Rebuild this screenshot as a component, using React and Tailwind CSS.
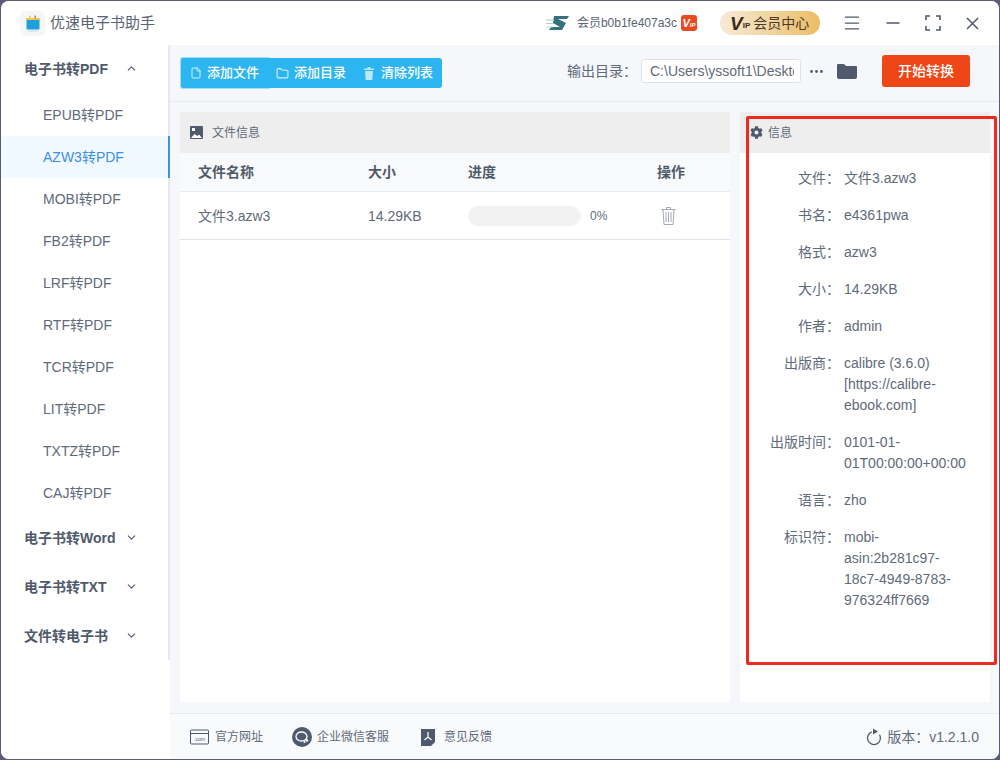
import React from 'react';
import { ChevronUp, ChevronDown, File, Folder, Menu, Ellipsis } from 'lucide-react';
import { FaCog } from 'react-icons/fa';

const FONT = '"Liberation Sans", "Noto Sans CJK SC", sans-serif';

const subItems = ['EPUB转PDF', 'AZW3转PDF', 'MOBI转PDF', 'FB2转PDF', 'LRF转PDF', 'RTF转PDF', 'TCR转PDF', 'LIT转PDF', 'TXTZ转PDF', 'CAJ转PDF'];

const infoRows = [
  { label: '文件：', value: '文件3.azw3', h: 'h-[37px]' },
  { label: '书名：', value: 'e4361pwa', h: 'h-[37px]' },
  { label: '格式：', value: 'azw3', h: 'h-[37px]' },
  { label: '大小：', value: '14.29KB', h: 'h-[37px]' },
  { label: '作者：', value: 'admin', h: 'h-[37px]' },
  { label: '出版商：', value: ['calibre (3.6.0)', '[https://calibre-', 'ebook.com]'], h: 'h-[79px]' },
  { label: '出版时间：', value: ['0101-01-', '01T00:00:00+00:00'], h: 'h-[58px]' },
  { label: '语言：', value: 'zho', h: 'h-[37px]' },
  { label: '标识符：', value: ['mobi-', 'asin:2b281c97-', '18c7-4949-8783-', '976324ff7669'], h: 'h-[84px]' },
];

function SideGroup({ title, open }) {
  return (
    <div className="h-[49px] flex items-center pl-[23px] pb-[2px] text-sm font-bold text-[#4f5a6b]">
      <span className="w-[100px] whitespace-nowrap">{title}</span>
      {open ? <ChevronUp size={13} className="ml-[1px]" /> : <ChevronDown size={13} className="ml-[1px]" />}
    </div>
  );
}

function Logo() {
  return (
    <div className="w-[25px] h-[25px] rounded-md bg-[#f4f6f8] flex items-center justify-center">
      <svg width="20" height="20" viewBox="0 0 20 20">
        <rect x="3.5" y="5" width="13" height="11.5" rx="1" fill="#1d9fe0" />
        <rect x="3.5" y="5" width="13" height="2" fill="#f5c542" />
        <rect x="6" y="2.5" width="1.5" height="3" fill="#f5c542" />
        <rect x="11.5" y="2.5" width="1.5" height="3" fill="#e8794a" />
        <rect x="5" y="17.5" width="10" height="1" fill="#c9d3de" />
      </svg>
    </div>
  );
}

function TitleBar() {
  return (
    <div className="h-[44px] flex items-center bg-white shrink-0">
      <div className="pl-[19px] flex items-center gap-[5px]">
        <Logo />
        <span className="text-[15px] text-[#5a6472]">优速电子书助手</span>
      </div>
      <div className="ml-auto flex items-center text-[#4f5a6b]">
        <svg width="24" height="20" viewBox="0 0 24 20" className="mr-[7px]">
          <path d="M8 3h15l-2 3h-9l8 4-4 7H3l2-3h9L7 10z" fill="#37707c" />
          <path d="M0 7h8M0 10.5h8M1 14h6" stroke="#a9d4d0" strokeWidth="1.2" />
        </svg>
        <span className="text-xs text-[#5a6472]">会员b0b1fe407a3c</span>
        <span className="ml-[4px] w-4 h-4 rounded-[3px] bg-[#ea4a1f] text-white font-bold flex items-center justify-center italic leading-none">
          <span className="text-[11px]">V</span>
          <span className="text-[6px] mt-[3px]">IP</span>
        </span>
        <div className="ml-[23px] w-[100px] h-6 rounded-full bg-gradient-to-r from-[#f6ead6] to-[#ecbd62] flex items-center pl-[10px] text-sm text-[#4a3a2a]">
          <span className="text-[19px] font-bold italic leading-none text-[#3b2a1c]">V</span>
          <span className="text-[8px] font-bold mt-[6px] mr-[3px] text-[#3b2a1c]">IP</span>
          会员中心
        </div>
        <Menu size={20} strokeWidth={1.5} className="ml-[22px]" />
        <svg width="14" height="14" viewBox="0 0 14 14" stroke="currentColor" strokeWidth="1.5" className="ml-[24px]">
          <path d="M0.5 7h13" />
        </svg>
        <svg width="16" height="16" viewBox="0 0 16 16" fill="none" stroke="currentColor" strokeWidth="1.6" className="ml-[25px]">
          <path d="M1 5V1h4M11 1h4v4M15 11v4h-4M5 15H1v-4" />
        </svg>
        <svg width="13" height="13" viewBox="0 0 13 13" fill="none" stroke="currentColor" strokeWidth="1.5" className="ml-[25px] mr-[20px]">
          <path d="M1 1l11 11M12 1L1 12" />
        </svg>
      </div>
    </div>
  );
}

function Sidebar() {
  return (
    <div className="w-[169px] shrink-0 bg-white">
      <div className="border-r-2 border-[#e6e8eb] h-[615px]">
        <SideGroup title="电子书转PDF" open />
        {subItems.map((item) => (
          <div
            key={item}
            className={
              item === 'AZW3转PDF'
                ? 'h-[42px] flex items-center pl-[42px] text-sm text-[#3f8fe3] bg-[#f0f9ff] border-r-2 border-[#3f8fe3] -mr-[2px]'
                : 'h-[42px] flex items-center pl-[42px] text-sm text-[#5f6a7a]'
            }
          >
            {item}
          </div>
        ))}
        <SideGroup title="电子书转Word" />
        <SideGroup title="电子书转TXT" />
        <SideGroup title="文件转电子书" />
      </div>
    </div>
  );
}

function Toolbar() {
  return (
    <div className="h-[57px] shrink-0 flex items-center border-b border-[#e8eaed] pl-[10px]">
      <div className="flex items-center text-white text-[13px] font-medium">
        <div className="w-[90px] h-[32px] rounded-l-[3px] bg-[#2cb5f0] border border-r-0 border-[#9fdff8] flex items-center pl-[9px]">
          <File size={12} className="mr-[5px] text-[#d5f1fd]" />
          添加文件
        </div>
        <div className="w-[86px] h-[30px] bg-[#2cb5f0] flex items-center pl-[6px]">
          <Folder size={13} className="mr-[5px] text-[#d5f1fd]" />
          添加目录
        </div>
        <div className="w-[86px] h-[30px] rounded-r-[3px] bg-[#2cb5f0] flex items-center pl-[7px]">
          <svg width="12" height="13" viewBox="0 0 12 13" fill="#b9e8fb" className="mr-[6px]">
            <path d="M4.5 0h3v1.5H11V3H1V1.5h3.5zM2 4h8l-.7 9H2.700z" />
          </svg>
          清除列表
        </div>
      </div>
      <div className="ml-auto mr-[29px] mb-[4px] flex items-center">
        <span className="text-sm text-[#5f6a7a] whitespace-nowrap">输出目录：</span>
        <div className="ml-[4px] w-[160px] h-6 bg-white border border-[#dfe2e6] rounded-[3px] pl-2 flex items-center text-sm text-[#5f6a7a] overflow-hidden whitespace-nowrap">
          <span className="w-[144px] overflow-hidden">C:\Users\yssoft1\Desktop</span>
        </div>
        <Ellipsis size={17} className="ml-[7px] text-[#4f5a6b]" />
        <svg width="20" height="18" viewBox="0 0 20 18" className="ml-[12px]">
          <path d="M0 3a1 1 0 0 1 1-1h6l2 2h10a1 1 0 0 1 1 1v10a2 2 0 0 1-2 2H2a2 2 0 0 1-2-2z" fill="#4f5a6f" />
        </svg>
        <button className="ml-[25px] w-[88px] h-8 rounded-[3px] bg-[#ee4617] text-white text-sm font-medium">开始转换</button>
      </div>
    </div>
  );
}

function TrashIcon() {
  return (
    <svg width="15" height="19" viewBox="0 0 15 19" fill="none" stroke="#9aa1ab" strokeWidth="0.9">
      <path d="M0.500 3.500h14M5.500 3.500V1.500h4v2M2 3.500l1 15h9l1-15M5 6v10M7.500 6v10M10 6v10" />
    </svg>
  );
}

function FilePanel() {
  return (
    <div className="w-[550px] bg-white flex flex-col">
      <div className="h-[41px] bg-[#eeeeee] flex items-center pl-[10px] text-xs text-[#5f6a7a]">
        <svg width="13" height="13" viewBox="0 0 13 13" className="mr-[9px]">
          <rect width="13" height="13" rx="1" fill="#4f5a6f" />
          <rect x="2" y="2" width="3" height="3" fill="#fff" />
          <path d="M1 12l3.500-4 3 2 1.500-1.500L12 12z" fill="#fff" />
        </svg>
        文件信息
      </div>
      <div className="h-[39px] bg-[#f9fafb] border-b border-[#e8eaed] flex items-center text-sm font-bold text-[#4f5a6b]">
        <span className="w-[170px] pl-[18px] shrink-0 box-content">文件名称</span>
        <span className="w-[100px] shrink-0">大小</span>
        <span className="w-[189px] shrink-0">进度</span>
        <span>操作</span>
      </div>
      <div className="h-[48px] border-b border-[#dfe2e6] flex items-center text-sm text-[#5f6a7a]">
        <span className="w-[170px] pl-[18px] shrink-0 box-content">文件3.azw3</span>
        <span className="w-[100px] shrink-0">14.29KB</span>
        <div className="w-[113px] h-5 rounded-full bg-[#f2f2f2] shrink-0" />
        <span className="ml-[9px] w-[71px] shrink-0 text-xs">0%</span>
        <TrashIcon />
      </div>
    </div>
  );
}

function InfoPanel() {
  return (
    <div className="w-[250px] ml-[10px] bg-white flex flex-col">
      <div className="h-[41px] bg-[#eeeeee] flex items-center pl-[10px] text-xs text-[#5f6a7a]">
        <FaCog size={13} className="text-[#4f5a6f] mr-[5px]" />
        信息
      </div>
      <div className="pt-[15px] text-sm leading-[21px] text-[#5f6a7a]">
        {infoRows.map((row) => (
          <div key={row.label} className={`flex ${row.h}`}>
            <span className="w-[100px] mr-[4px] text-right whitespace-nowrap shrink-0">{row.label}</span>
            <div className="whitespace-nowrap">
              {[].concat(row.value).map((line) => (
                <div key={line}>{line}</div>
              ))}
            </div>
          </div>
        ))}
      </div>
    </div>
  );
}

function Footer() {
  return (
    <div className="h-[46px] shrink-0 border-t border-[#e8eaed] bg-[#f9fafb] flex items-center pl-5 pr-[20px] text-xs text-[#5f6a7a]">
      <svg width="19" height="16" viewBox="0 0 19 16" fill="none" stroke="#4f5a6f" className="mr-[6px]">
        <rect x="0.500" y="1" width="18" height="14" rx="1" />
        <path d="M1 4.500h17" />
        <text x="9.500" y="12" fontSize="5" fill="#4f5a6f" stroke="none" textAnchor="middle">.com</text>
      </svg>
      <span>官方网址</span>
      <svg width="20" height="20" viewBox="0 0 20 20" className="ml-[29px] mr-[5px]">
        <circle cx="10" cy="10" r="10" fill="#4f5a6f" />
        <ellipse cx="9.500" cy="9.500" rx="5.500" ry="4.500" fill="none" stroke="#fff" strokeWidth="1.3" />
        <circle cx="15" cy="13.500" r="1.200" fill="#fff" />
        <circle cx="12.500" cy="15" r="1" fill="#fff" />
      </svg>
      <span>企业微信客服</span>
      <svg width="14" height="18" viewBox="0 0 14 18" className="ml-[32px] mr-[9px]">
        <path d="M0 1h14v13l-4 4H0z" fill="#4f5a6f" />
        <path d="M7 4v5M3.500 12L7 9l3.500 3" stroke="#fff" strokeWidth="1.200" fill="none" />
      </svg>
      <span>意见反馈</span>
      <svg width="16" height="18" viewBox="0 0 16 18" fill="none" className="ml-auto mr-[5px]">
        <path d="M13.600 6.800A6.500 6.500 0 1 1 5.800 3.900" stroke="#4f5a6f" strokeWidth="1.300" />
        <path d="M7 0.500l5 3-5 3z" fill="#4f5a6f" />
      </svg>
      <span className="text-sm whitespace-nowrap">版本：v1.2.1.0</span>
    </div>
  );
}

export default function App() {
  return (
    <div className="w-[1000px] h-[760px] relative bg-[#5d5a78] p-px overflow-hidden" style={{ fontFamily: FONT }}>
      <div className="h-full flex flex-col bg-white rounded-lg overflow-hidden">
        <TitleBar />
        <div className="flex flex-1 min-h-0">
          <Sidebar />
          <div className="flex-1 flex flex-col bg-[#f5f7fa] min-w-0">
            <Toolbar />
            <div className="flex-1 flex pl-[10px] pt-[10px] pb-[11px] min-h-0">
              <FilePanel />
              <InfoPanel />
            </div>
            <Footer />
          </div>
        </div>
      </div>
      <div className="absolute left-[746px] top-[116px] w-[251px] h-[549px] border-[3px] border-[#ec2a20] rounded-[2px] pointer-events-none" />
    </div>
  );
}
